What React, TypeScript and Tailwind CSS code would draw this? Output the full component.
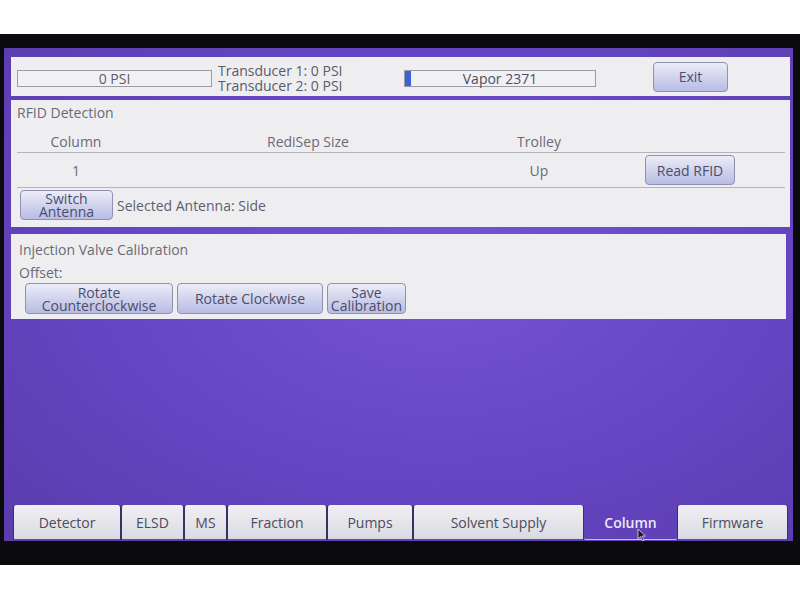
import React from 'react'

const font = { fontFamily: '"Open Sans", "Noto Sans", sans-serif' }

function PanelButton({ children, className = '' }: { children: React.ReactNode; className?: string }) {
    return (
        <div
            className={`flex items-center justify-center text-center leading-[13px] text-[14px] text-[#4b4d6c] rounded-[4px] border border-[#8f91b2] bg-gradient-to-b from-[#ececf8] to-[#b8bce2] ${className}`}
        >
            {children}
        </div>
    )
}

const tabs = [
    { label: 'Detector', w: 'w-[108px]' },
    { label: 'ELSD', w: 'w-[63px]' },
    { label: 'MS', w: 'w-[43px]' },
    { label: 'Fraction', w: 'w-[100px]' },
    { label: 'Pumps', w: 'w-[86px]' },
    { label: 'Solvent Supply', w: 'w-[171px]' },
    { label: 'Column', w: 'w-[93px]', active: true },
    { label: 'Firmware', w: 'w-[111px]' },
]

export default function App() {
    return (
        <div className="w-[800px] h-[600px] bg-white flex flex-col overflow-hidden" style={font}>
            <div className="h-[34px] bg-white" />

            {/* bezel */}
            <div className="h-[531px] bg-[#0b0a0e] pt-[14px] pl-[4px] pr-[7px] pb-[24px]">
                <div className="h-[493px] flex flex-col bg-[radial-gradient(ellipse_at_55%_45%,#7654d2,#6444c0_60%,#5a3cac)]">
                    {/* status bar */}
                    <div className="mt-[9px] ml-[7px] mr-[3px] h-[39px] bg-[#eeeef1] flex items-center pl-[6px] pt-[3px]">
                        <div className="w-[195px] h-[17px] border border-[#9c9ca8] bg-[#f1f1f3] flex items-center justify-center text-[14px] text-[#5c5c6a]">
                            0 PSI
                        </div>
                        <div className="w-[186px] ml-[6px] text-[14px] leading-[15px] text-[#5a5a6a]">
                            <div>Transducer 1: 0 PSI</div>
                            <div>Transducer 2: 0 PSI</div>
                        </div>
                        <div className="w-[192px] h-[17px] border border-[#9c9ca8] bg-[#f1f1f3] flex items-center relative">
                            <div className="absolute left-0 top-0 bottom-0 w-[6px] bg-[#3a62d4]" />
                            <div className="flex-1 text-center text-[14px] text-[#4e4e62]">Vapor 2371</div>
                        </div>
                        <PanelButton className="ml-[57px] w-[75px] h-[30px] -mt-[3px]">Exit</PanelButton>
                    </div>

                    {/* RFID detection */}
                    <div className="mt-[4px] ml-[7px] mr-[3px] h-[127px] bg-[#eeeef1] flex flex-col text-[14px] text-[#6a6a76]">
                        <div className="pl-[6px] pt-[4px] h-[30px] leading-[17px]">RFID Detection</div>
                        <div className="ml-[6px] mr-[5px] h-[23px] flex items-center border-b border-[#b4b4bc]">
                            <div className="w-[118px] text-center">Column</div>
                            <div className="w-[346px] text-center">RediSep Size</div>
                            <div className="w-[116px] text-center">Trolley</div>
                        </div>
                        <div className="ml-[6px] mr-[5px] h-[35px] flex items-center border-b border-[#b4b4bc]">
                            <div className="w-[118px] text-center">1</div>
                            <div className="w-[346px] text-center" />
                            <div className="w-[116px] text-center">Up</div>
                            <PanelButton className="ml-[48px] w-[90px] h-[30px]">Read RFID</PanelButton>
                        </div>
                        <div className="flex items-center pl-[9px] pt-[2px]">
                            <PanelButton className="w-[93px] h-[30px]">
                                Switch
                                <br />
                                Antenna
                            </PanelButton>
                            <span className="ml-[4px] text-[#5e5e6c]">Selected Antenna: Side</span>
                        </div>
                    </div>

                    {/* injection valve calibration */}
                    <div className="mt-[7px] ml-[7px] mr-[7px] h-[85px] bg-[#eeeef1] flex flex-col text-[14px] text-[#6a6a76]">
                        <div className="pl-[8px] pt-[7px] leading-[18px]">Injection Valve Calibration</div>
                        <div className="pl-[8px] pt-[6px] leading-[16px]">Offset:</div>
                        <div className="flex gap-[4px] pl-[14px] pt-[2px]">
                            <PanelButton className="w-[148px] h-[31px]">
                                Rotate
                                <br />
                                Counterclockwise
                            </PanelButton>
                            <PanelButton className="w-[146px] h-[31px]">Rotate Clockwise</PanelButton>
                            <PanelButton className="w-[79px] h-[31px]">
                                Save
                                <br />
                                Calibration
                            </PanelButton>
                        </div>
                    </div>

                    <div className="flex-1" />

                    {/* tab bar */}
                    <div className="flex items-end h-[38px] pl-[9px] mb-[1px] relative">
                        {tabs.map((t) =>
                            t.active ? (
                                <div
                                    key={t.label}
                                    className={`${t.w} h-[35px] flex items-center justify-center text-[14px] font-semibold text-[#ece8f8] border-b border-[#c9bff0] rounded-b-[2px]`}
                                >
                                    {t.label}
                                </div>
                            ) : (
                                <div
                                    key={t.label}
                                    className={`${t.w} h-[35px] flex items-center justify-center text-[14px] text-[#4c4c5e] bg-gradient-to-b from-[#f0f0f3] to-[#d9d9e2] rounded-t-[3px] border-l border-r border-[#3b2f63] shadow-[inset_0_-1px_0_#5b5480]`}
                                >
                                    {t.label}
                                </div>
                            )
                        )}
                        {/* touch cursor */}
                        <svg className="absolute left-[633px] top-[26px]" width="10" height="14" viewBox="0 0 10 14">
                            <path d="M1 1 L1 11 L3.5 8.5 L5.5 13 L7 12.3 L5 8 L8.5 8 Z" fill="#1e1a2c" stroke="#d8d4ea" strokeWidth="0.8" />
                        </svg>
                    </div>
                </div>
            </div>

            <div className="flex-1 bg-white" />
        </div>
    )
}
